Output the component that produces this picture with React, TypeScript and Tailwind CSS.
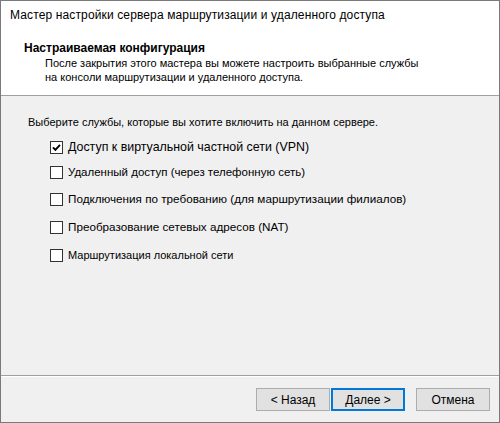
import React from 'react';

// per-line sizes tuned so the Arial-width font covers the same span as the original
const services = [
  { label: 'Доступ к виртуальной частной сети (VPN)', checked: true, mt: 'mt-[9px]', size: 'text-[12.4px]' },
  { label: 'Удаленный доступ (через телефонную сеть)', checked: false, mt: 'mt-[9px]', size: 'text-[11.5px]' },
  { label: 'Подключения по требованию (для маршрутизации филиалов)', checked: false, mt: 'mt-[11px]', size: 'text-[11.7px]' },
  { label: 'Преобразование сетевых адресов (NAT)', checked: false, mt: 'mt-[12px]', size: 'text-[11.7px]' },
  { label: 'Маршрутизация локальной сети', checked: false, mt: 'mt-[12px]', size: 'text-[11px]' },
];

function CheckBox({ checked }: { checked: boolean }) {
  return (
    <div className="w-[13px] h-[13px] border border-[#333333] bg-white flex items-center justify-center shrink-0">
      {checked && (
        <svg width="9" height="9" viewBox="0 0 9 9">
          <path d="M1 4.3 L3.4 6.8 L8 1.8" fill="none" stroke="#000" strokeWidth="1.9" />
        </svg>
      )}
    </div>
  );
}

export default function App() {
  return (
    <div
      className="w-[500px] h-[423px] border border-[#7a7a7a] bg-[#f0f0f0] flex flex-col text-[12px] text-black"
      style={{ fontFamily: '"Liberation Sans", Arial, sans-serif' }}
    >
      {/* Header */}
      <div className="h-[95px] bg-white border-b border-[#a0a0a0] shrink-0">
        <div className="pl-[9px] pt-[6px] leading-[16px] tracking-[0.13px]">
          Мастер настройки сервера маршрутизации и удаленного доступа
        </div>
        <div className="pl-[23px] mt-[18px] leading-[15px] font-bold">Настраиваемая конфигурация</div>
        <div className="pl-[44px] leading-[14px] text-[11px]">
          <div>После закрытия этого мастера вы можете настроить выбранные службы</div>
          <div>на консоли маршрутизации и удаленного доступа.</div>
        </div>
      </div>

      {/* Body */}
      <div className="flex-1 pt-[18px] pl-[27px]">
        <div className="leading-[16px] text-[11px]">
          Выберите службы, которые вы хотите включить на данном сервере.
        </div>
        {services.map((s) => (
          <div key={s.label} className={`${s.mt} flex items-center h-[16px] pl-[22px] gap-[5px]`}>
            <CheckBox checked={s.checked} />
            <span className={`${s.size} leading-[16px]`}>{s.label}</span>
          </div>
        ))}
      </div>

      {/* Footer */}
      <div className="shrink-0 h-[47px]">
        <div className="h-px bg-[#a0a0a0]" />
        <div className="h-px bg-white" />
        <div className="flex justify-end pt-[11px] pr-[9px]">
          <button className="w-[74px] h-[23px] bg-[#e1e1e1] border border-[#adadad] leading-[16px]">
            &lt; Назад
          </button>
          <button className="ml-[1px] w-[74px] h-[23px] bg-[#e1e1e1] border-2 border-[#0078d7] leading-[16px]">
            Далее &gt;
          </button>
          <button className="ml-[11px] w-[74px] h-[23px] bg-[#e1e1e1] border border-[#adadad] leading-[16px]">
            Отмена
          </button>
        </div>
      </div>
    </div>
  );
}
